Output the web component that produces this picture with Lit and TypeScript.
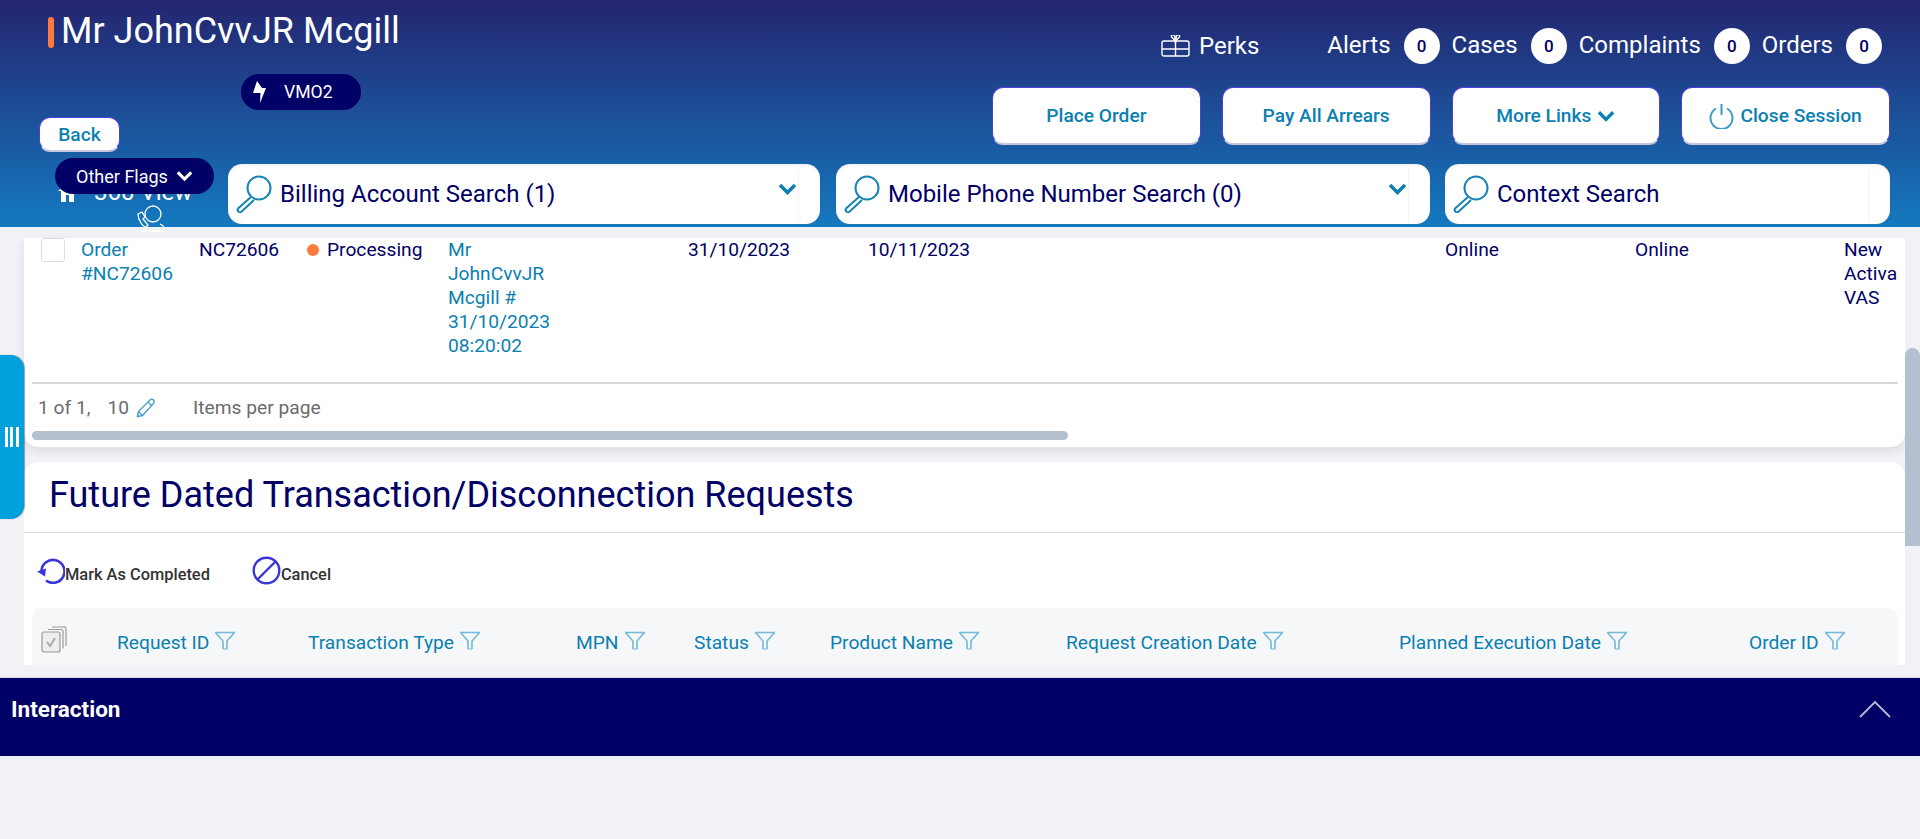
import { LitElement, html, css } from 'lit';
import { customElement } from 'lit/decorators.js';

const chevron = (w: number, h: number, color: string, sw = 3.5) => html`<svg class="chev" width=${w} height=${h} viewBox="0 0 19 12"><path d="M2 2l7.5 7.5L17 2" fill="none" stroke=${color} stroke-width=${sw}/></svg>`;

const lens = html`<svg class="lens" width="36" height="38" viewBox="0 0 36 38" fill="none" stroke="#1483b6" stroke-width="2">
  <circle cx="23" cy="13" r="11.5"/>
  <path d="M15 22L2 33.5a2 2 0 0 0 0 2.5l.8.8a2 2 0 0 0 2.6 0L18 25"/>
</svg>`;

const filter = html`<svg class="filter" width="22" height="19" viewBox="0 0 22 19" fill="none" stroke="#74b9d8" stroke-width="1.6">
  <path d="M1 1.5h20M1.5 1.5l7.5 8.5v8M20.5 1.5L13 10v8"/>
  <path d="M9 18h4" stroke-width="1"/>
</svg>`;

const orderCols = ['31/10/2023', '10/11/2023', 'Online', 'Online'];

const counters = ['Alerts', 'Cases', 'Complaints', 'Orders'];

const tableHeads = [
  ['Request ID', 191],
  ['Transaction Type', 268],
  ['MPN', 118],
  ['Status', 136],
  ['Product Name', 236],
  ['Request Creation Date', 333],
  ['Planned Execution Date', 350],
  ['Order ID', 120],
] as [string, number][];

@customElement('app-root')
export class AppRoot extends LitElement {
  static styles = css`
    :host {
      display: block;
      min-height: 100vh;
      background: #f1f2f6;
      font-family: Roboto, 'Liberation Sans', sans-serif;
      color: #000066;
      position: relative;
      overflow: hidden;
    }
    header {
      height: 227px;
      background: linear-gradient(#242570, #1479bf);
      display: flex;
      flex-direction: column;
    }
    .head-top {
      height: 164px;
      display: flex;
    }
    .head-left {
      flex: 0 0 992px;
    }
    .name {
      display: flex;
      align-items: center;
      height: 31px;
      margin: 17px 0 0 48px;
      color: #fff;
      font-size: 36px;
      line-height: 31px;
    }
    .name i {
      width: 6px;
      height: 31px;
      border-radius: 3px;
      background: #ff7a3d;
      margin-right: 7px;
    }
    .name span {
      margin-top: -2px;
    }
    .pill {
      display: inline-flex;
      align-items: center;
      background: #000066;
      color: #fff;
      border-radius: 18px;
      height: 36px;
      font-size: 17.6px;
    }
    .vmo {
      display: flex;
      width: 120px;
      margin: 26px 0 0 241px;
      padding-left: 11px;
      box-sizing: border-box;
    }
    .vmo span {
      margin-left: 17px;
    }
    .btn {
      display: flex;
      align-items: center;
      justify-content: center;
      background: #fff;
      color: #0b7fb1;
      font-size: 19.2px;
      font-weight: 500;
      border: 1px solid #4a3fd6;
      border-bottom: 2px solid #c4c6e0;
      border-radius: 11px;
      box-sizing: border-box;
    }
    .back {
      width: 81px;
      height: 35px;
      margin: 7px 0 0 39px;
    }
    .head-right {
      flex: 1;
      padding-right: 30px;
    }
    .stats {
      display: flex;
      justify-content: flex-end;
      align-items: center;
      height: 36px;
      margin-top: 28px;
      padding-right: 8px;
      color: #fff;
      font-size: 24px;
    }
    .stats > span.lbl {
      margin-top: -3px;
    }
    .perks {
      display: flex;
      align-items: center;
      gap: 8px;
      margin-right: 68px;
    }
    .badge {
      width: 36px;
      height: 36px;
      border-radius: 50%;
      background: #fff;
      color: #000066;
      font-size: 17px;
      font-weight: 500;
      display: flex;
      align-items: center;
      justify-content: center;
      margin: 0 12px 0 13px;
    }
    .badge:last-child {
      margin-right: 0;
    }
    .actions {
      display: flex;
      gap: 21px;
      margin-top: 23px;
    }
    .actions .btn {
      flex: 1;
      height: 58px;
      gap: 6px;
    }
    .search-row {
      display: flex;
      height: 63px;
      padding-right: 30px;
    }
    .side {
      flex: 0 0 228px;
      position: relative;
      color: #fff;
    }
    .view360 {
      display: flex;
      align-items: center;
      gap: 16px;
      padding: 16px 0 0 57px;
      font-size: 24px;
      line-height: 24px;
    }
    .phone {
      display: block;
      margin: 0 0 0 135px;
    }
    .flags {
      position: absolute;
      left: 55px;
      top: -6px;
      width: 159px;
      justify-content: center;
      gap: 8px;
      font-size: 18px;
    }
    .box {
      position: relative;
      height: 60px;
      background: #fff;
      border-radius: 14px;
      display: flex;
      align-items: center;
      gap: 8px;
      padding-left: 8px;
      font-size: 24px;
      box-sizing: border-box;
      box-shadow: inset 0 2px 3px rgba(0, 0, 0, 0.06);
      margin-right: 16px;
    }
    .box::after {
      content: '';
      position: absolute;
      right: 21px;
      top: 2px;
      bottom: 0;
      width: 1px;
      background: #f3f3f6;
    }
    .box:last-child {
      margin-right: 0;
    }
    .box .chev {
      position: absolute;
      right: 23px;
      top: 19px;
    }
    .b1 { width: 592px; }
    .b2 { width: 594px; margin-right: 15px; }
    .b3 { width: 445px; }
    main {
      display: flex;
      height: 438px;
    }
    .view {
      flex: 1;
      padding: 12px 0 0 24px;
      height: 426px;
      overflow: hidden;
    }
    .track {
      flex: 0 0 15px;
    }
    .thumb {
      margin-top: 121px;
      height: 198px;
      background: #b4bfd0;
      border-radius: 8px 8px 0 0;
    }
    .card {
      background: #fff;
    }
    .orders {
      height: 209px;
      border-radius: 0 0 14px 14px;
      box-shadow: 0 4px 10px rgba(30, 40, 80, 0.1);
      margin-bottom: 15px;
      padding: 0 7px 0 8px;
      box-sizing: border-box;
    }
    .row {
      display: grid;
      grid-template-columns: 40px 118px 108px 141px 240px 180px 577px 190px 209px 53px;
      padding-left: 9px;
      height: 146px;
      box-sizing: border-box;
      border-bottom: 2px solid #d3d7de;
      font-size: 19.2px;
      line-height: 24px;
      margin-top: -1px;
    }
    .row > div {
      overflow: hidden;
    }
    .check {
      width: 24px;
      height: 24px;
      border: 1px solid #d9dbe0;
      border-radius: 3px;
      box-sizing: border-box;
    }
    .link {
      color: #0b7fb1;
    }
    .ord {
      width: 100px;
    }
    .who {
      width: 112px;
    }
    .status {
      display: flex;
      align-items: flex-start;
    }
    .status i {
      flex: none;
      width: 12px;
      height: 12px;
      margin: 6px 8px 0 0;
      border-radius: 50%;
      background: #ff7a3d;
    }
    .pager {
      display: flex;
      align-items: center;
      height: 47px;
      padding-left: 6px;
      color: #6b6b6b;
      font-size: 19.2px;
    }
    .pager .ten {
      margin-left: 17px;
      margin-right: 7px;
    }
    .pager .per {
      margin-left: 37px;
    }
    .hbar {
      width: 1036px;
      height: 9px;
      border-radius: 5px;
      background: #b4bfd0;
    }
    .future {
      border-radius: 14px 14px 0 0;
      height: 300px;
      padding: 0 7px 0 8px;
    }
    h2 {
      margin: 0 -7px 0 -8px;
      height: 71px;
      padding: 0 0 4px 25px;
      display: flex;
      align-items: center;
      box-sizing: border-box;
      border-bottom: 1px solid #d8dbe2;
      font-size: 36px;
      font-weight: 400;
    }
    .tools {
      display: flex;
      align-items: center;
      height: 75px;
      padding-left: 5px;
      color: #333;
      font-size: 16.4px;
      font-weight: 500;
    }
    .tools span {
      margin: 7px 42px 0 0;
    }
    .thead {
      display: flex;
      align-items: center;
      height: 68px;
      padding-left: 9px;
      box-sizing: border-box;
      background: #f6f7f8;
      border-radius: 10px 10px 0 0;
      color: #0b7fb1;
      font-size: 19.2px;
    }
    .selall {
      flex: 0 0 76px;
    }
    .th {
      display: flex;
      align-items: center;
      gap: 5px;
      flex: none;
    }
    .th svg {
      margin-top: -4px;
    }
    .dock {
      height: 79px;
      margin-top: 12px;
      background: #000066;
      border-top: 1px solid #d8dbe6;
      box-sizing: border-box;
      color: #fff;
      display: flex;
      align-items: center;
      justify-content: space-between;
      padding: 0 29px 16px 11px;
      font-size: 22.5px;
      font-weight: 700;
    }
    .tab {
      position: absolute;
      left: 0;
      top: 355px;
      width: 24px;
      height: 164px;
      background: #00a0dc;
      border-radius: 0 14px 14px 0;
      box-shadow: 1px 0 1px rgba(60, 60, 60, 0.5);
      display: flex;
      align-items: center;
      justify-content: center;
      gap: 2.5px;
      padding-right: 1px;
      box-sizing: border-box;
    }
    .tab i {
      width: 3px;
      height: 20px;
      background: #fff;
    }
  `;

  render() {
    return html`
      <header>
        <div class="head-top">
          <div class="head-left">
            <div class="name"><i></i><span>Mr JohnCvvJR Mcgill</span></div>
            <div class="pill vmo">
              <svg width="15" height="22" viewBox="0 0 15 22"><path d="M5 0l5 7h4L8 22l.5-10H1z" fill="#fff"/></svg>
              <span>VMO2</span>
            </div>
            <div class="btn back">Back</div>
          </div>
          <div class="head-right">
            <div class="stats">
              <div class="perks">
                <svg width="30" height="22" viewBox="0 0 30 22" fill="none" stroke="#fff" stroke-width="1.4">
                  <rect x="1" y="6" width="27" height="15" rx="2"/>
                  <path d="M1 14h27M14.500 6v15"/>
                  <path d="M14.500 6l-4-4a1.700 1.700 0 0 1 3-1.500zM14.500 6l4-4a1.700 1.700 0 0 0-3-1.500z"/>
                </svg>
                <span>Perks</span>
              </div>
              ${counters.map((c) => html`<span class="lbl">${c}</span><span class="badge">0</span>`)}
            </div>
            <div class="actions">
              <div class="btn">Place Order</div>
              <div class="btn">Pay All Arrears</div>
              <div class="btn">More Links ${chevron(18, 12, '#0b7fb1')}</div>
              <div class="btn">
                <svg width="25" height="26" viewBox="0 0 25 26" fill="none" stroke="#3d9cc4" stroke-width="2">
                  <path d="M7 5.500a11 11 0 1 0 11 0M12.500 1v11"/>
                </svg>
                Close Session
              </div>
            </div>
          </div>
        </div>
        <div class="search-row">
          <div class="side">
            <div class="view360">
              <svg width="21" height="20" viewBox="0 0 21 20"><path d="M10.500 1L1 9h3v11h5v-7h3v7h5V9h3z" fill="#fff"/></svg>
              360 View
            </div>
            <svg class="phone" width="30" height="28" viewBox="0 0 30 28" fill="none" stroke="#fff" stroke-width="1.3">
              <circle cx="18" cy="10" r="8"/>
              <path d="M3 10l4-2 3 5-2 2 5 6-2 2c-3 0-8-7-8-13z"/>
              <path d="M5 27h24v-3c0-2-2-3-4-4"/>
            </svg>
            <div class="pill flags">Other Flags ${chevron(17, 12, '#fff')}</div>
          </div>
          <div class="box b1">${lens}Billing Account Search (1)${chevron(19, 12, '#0b7fb1')}</div>
          <div class="box b2">${lens}Mobile Phone Number Search (0)${chevron(19, 12, '#0b7fb1')}</div>
          <div class="box b3">${lens}Context Search</div>
        </div>
      </header>
      <main>
        <div class="view">
          <div class="card orders">
            <div class="row">
              <div><div class="check"></div></div>
              <div class="link"><div class="ord">Order #NC72606</div></div>
              <div>NC72606</div>
              <div class="status"><i></i>Processing</div>
              <div class="link"><div class="who">Mr JohnCvvJR Mcgill # 31/10/2023 08:20:02</div></div>
              ${orderCols.map((c) => html`<div>${c}</div>`)}
              <div>New Activation VAS</div>
            </div>
            <div class="pager">
              1 of 1,
              <span class="ten">10</span>
              <svg width="20" height="20" viewBox="0 0 20 20" fill="none" stroke="#4a9fcb" stroke-width="1.4">
                <path d="M1.500 18.500l1-5L14 2a2.200 2.200 0 0 1 3.500 3.500L6.500 17.500zM12 4l3.500 3.500M2.500 13.500l4 4"/>
              </svg>
              <span class="per">Items per page</span>
            </div>
            <div class="hbar"></div>
          </div>
          <div class="card future">
            <h2>Future Dated Transaction/Disconnection Requests</h2>
            <div class="tools">
              <svg width="28" height="26" viewBox="0 0 28 26" fill="none" stroke="#3a35d8" stroke-width="2.600">
                <path d="M4.500 13A11.500 11.500 0 1 1 9 22.500"/>
                <path d="M0 13.500l9-3-1 8z" fill="#3a35d8" stroke="none"/>
              </svg>
              <span>Mark As Completed</span>
              <svg width="29" height="29" viewBox="0 0 29 29" fill="none" stroke="#3a35d8" stroke-width="2.400">
                <circle cx="14.500" cy="14.500" r="12.800"/>
                <path d="M5.500 23.500l18-18"/>
              </svg>
              <span>Cancel</span>
            </div>
            <div class="thead">
              <div class="selall">
                <svg width="26" height="27" viewBox="0 0 26 27" fill="none" stroke="#9a9a9a" stroke-width="1.200">
                  <rect x="1" y="6" width="18" height="20" rx="2" fill="#eee"/>
                  <path d="M7 3.500h13a2 2 0 0 1 2 2v17M11 1h11a2 2 0 0 1 3 2v17"/>
                  <path d="M6 16l3 4 5-8" stroke="#aaa" stroke-width="2"/>
                </svg>
              </div>
              ${tableHeads.map(([label, w]) => html`<div class="th" style="width:${w}px">${label}${filter}</div>`)}
            </div>
          </div>
        </div>
        <div class="track"><div class="thumb"></div></div>
      </main>
      <div class="dock">
        Interaction
        <svg width="32" height="18" viewBox="0 0 32 18" fill="none" stroke="#b9b9d6" stroke-width="1.800"><path d="M1 17L16 2l15 15"/></svg>
      </div>
      <div class="tab"><i></i><i></i><i></i></div>
    `;
  }
}
